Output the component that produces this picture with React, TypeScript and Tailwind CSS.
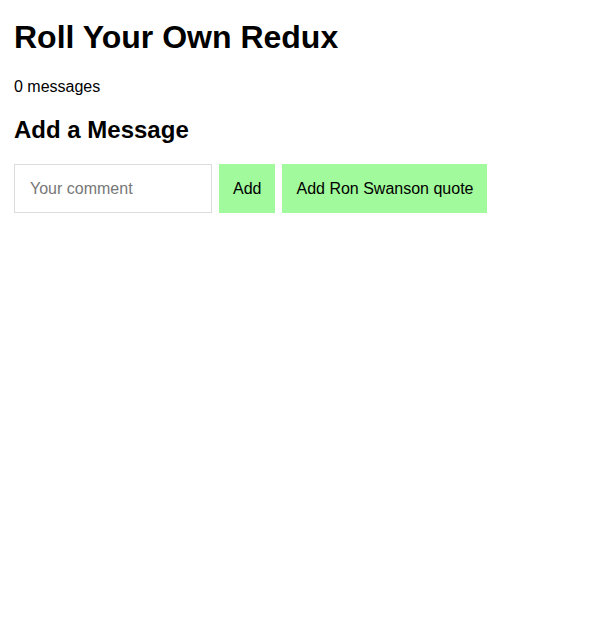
export default function App() {
  return (
    <div className="min-h-screen bg-white px-[14px] text-black [font-family:'Liberation_Sans',Arial,sans-serif]">
      <h1 className="mt-[19px] text-[32px] font-bold leading-[37px]">Roll Your Own Redux</h1>

      <p className="mt-[22px] text-[16px] leading-[18px]">0 messages</p>

      <h2 className="mt-[20px] text-[24px] font-bold leading-[28px]">Add a Message</h2>

      <form className="mt-[20px] flex gap-[7px]" onSubmit={(e) => e.preventDefault()}>
        <input
          type="text"
          placeholder="Your comment"
          className="h-[49px] w-[198px] border border-[#dcdcdc] px-[15px] text-[16px] outline-none placeholder:text-[#777]"
        />
        <button type="submit" className="h-[49px] bg-[#a1fa9b] px-[14px] text-[16px]">
          Add
        </button>
        <button type="button" className="h-[49px] bg-[#a1fa9b] px-[14px] text-[16px]">
          Add Ron Swanson quote
        </button>
      </form>
    </div>
  );
}
